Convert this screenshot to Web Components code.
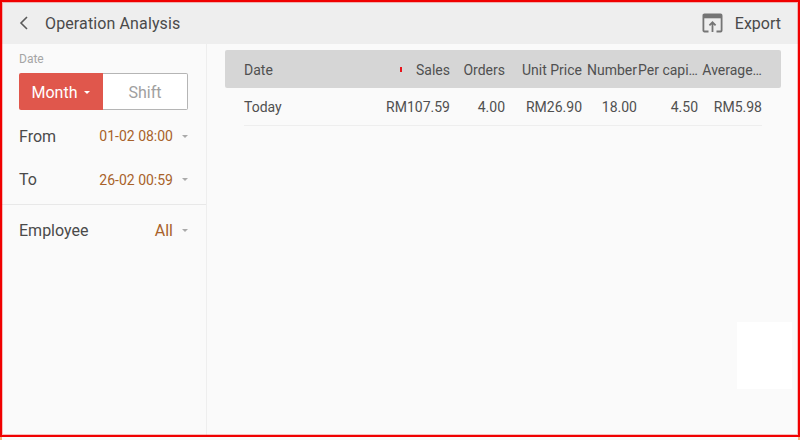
<!DOCTYPE html>
<html>
<head>
<meta charset="utf-8">
<title>Operation Analysis</title>
<style>
  html, body { margin: 0; height: 100%; }
  body { font-family: Roboto, "Liberation Sans", sans-serif; background: #fafafa; overflow: hidden; }
</style>
</head>
<body>
<analysis-app></analysis-app>
<page-foot></page-foot>

<script>
// top bar with back arrow, title and export action
class TopBar extends HTMLElement {
  constructor() {
    super();
    this.attachShadow({ mode: 'open' });
    this.shadowRoot.innerHTML = `
      <style>
        :host {
          display: flex;
          align-items: center;
          height: 42px;
          padding: 0 17px 0 17px;
          background: #eeeeee;
          color: #4a4a4a;
          font-size: 16px;
          flex: none;
        }
        .back { width: 9px; height: 14px; margin-right: 17px; }
        .title { flex: 1; letter-spacing: .12px; }
        .icon { width: 21px; height: 20px; margin-right: 12px; }
      </style>
      <svg class="back" viewBox="0 0 9 14" fill="none" stroke="#5a5a5a" stroke-width="1.6">
        <path d="M8 1 2 7l6 6"/>
      </svg>
      <span class="title"><slot></slot></span>
      <svg class="icon" viewBox="0 0 21 20" fill="none" stroke="#757575" stroke-width="1.8">
        <path d="M6.5 18.5H2.4a1 1 0 0 1-1-1V2.4a1 1 0 0 1 1-1h16.2a1 1 0 0 1 1 1v15.1a1 1 0 0 1-1 1h-4.1"/>
        <path d="M2 3.6h17" stroke-width="3.4"/>
        <path d="M10.5 19v-9M7.4 12.4l3.1-3.1 3.1 3.1"/>
      </svg>
      <span>Export</span>
    `;
  }
}

// label + value + small caret
class FilterRow extends HTMLElement {
  constructor() {
    super();
    this.attachShadow({ mode: 'open' });
    this.shadowRoot.innerHTML = `
      <style>
        :host {
          display: flex;
          align-items: center;
          justify-content: space-between;
          height: 43.5px;
          padding: 0 18px 0 17px;
          font-size: 16px;
          color: #4a4a4a;
        }
        .value { display: flex; align-items: center; color: #a8622a; font-size: var(--value-size, 14px); }
        .caret {
          width: 0; height: 0;
          margin-left: 9px;
          border-left: 3.5px solid transparent;
          border-right: 3.5px solid transparent;
          border-top: 3.5px solid #aaa;
        }
      </style>
      <span><slot name="label"></slot></span>
      <span class="value"><slot></slot><i class="caret"></i></span>
    `;
  }
}

// Month / Shift segmented control
class PeriodSwitch extends HTMLElement {
  constructor() {
    super();
    this.attachShadow({ mode: 'open' });
    this.shadowRoot.innerHTML = `
      <style>
        :host {
          display: flex;
          height: 37.5px;
          margin: 0 18px 0 17px;
          font-size: 16px;
        }
        div {
          display: flex;
          align-items: center;
          justify-content: center;
          box-sizing: border-box;
          flex: 1;
          padding-top: 2px;
        }
        .on { background: #e0574c; color: #fff; border-radius: 2px 0 0 2px; }
        .off {
          color: #a0a0a0;
          background: #fff;
          border: 1px solid #b5b5b5;
          border-left: 0;
          border-radius: 0 2px 2px 0;
        }
        .caret {
          width: 0; height: 0;
          margin-left: 7px;
          border-left: 3.5px solid transparent;
          border-right: 3.5px solid transparent;
          border-top: 3.5px solid #fff;
        }
      </style>
      <div class="on">Month<i class="caret"></i></div>
      <div class="off">Shift</div>
    `;
  }
}

class SidePanel extends HTMLElement {
  constructor() {
    super();
    this.attachShadow({ mode: 'open' });
    this.shadowRoot.innerHTML = `
      <style>
        :host {
          display: block;
          box-sizing: border-box;
          width: 205px;
          flex: none;
          border-right: 1px solid #eeeeee;
          padding-top: 8px;
        }
        .cap { font-size: 12px; line-height: 14px; color: #a5a5a5; padding: 0 0 6.5px 17px; }
        period-switch { margin-bottom: 4.5px; }
        hr { margin: 2.5px 0 4px; border: 0; border-top: 1px solid #e8e8e8; }
        .emp { --value-size: 16px; }
      </style>
      <div class="cap">Date</div>
      <period-switch></period-switch>
      <filter-row><span slot="label">From</span>01-02 08:00</filter-row>
      <filter-row><span slot="label">To</span>26-02 00:59</filter-row>
      <hr>
      <filter-row class="emp"><span slot="label">Employee</span>All</filter-row>
    `;
  }
}

const COLUMNS = [
  { name: 'Date', value: 'Today', width: 120, left: true },
  { name: 'Sales', value: 'RM107.59', width: 86 },
  { name: 'Orders', value: '4.00', width: 55 },
  { name: 'Unit Price', value: 'RM26.90', width: 77 },
  { name: 'Number', value: '18.00', width: 55 },
  { name: 'Per capi…', value: '4.50', width: 61 },
  { name: 'Average…', value: 'RM5.98', width: 64 }
];

class ReportTable extends HTMLElement {
  constructor() {
    super();
    this.attachShadow({ mode: 'open' });
    const cols = COLUMNS.map(c => c.width + 'px').join(' ');
    const cell = (text, c) => `<span class="${c.left ? 'left' : ''}">${text}</span>`;
    this.shadowRoot.innerHTML = `
      <style>
        :host {
          display: block;
          flex: 1;
          padding: 6px 17px 0 18px;
          font-size: 14px;
          color: #505050;
        }
        .row {
          display: grid;
          grid-template-columns: ${cols};
          align-items: center;
        }
        .row span {
          text-align: right;
          white-space: nowrap;
        }
        .row span.left { text-align: left; }
        .head {
          position: relative;
          height: 37px;
          padding: 1px 19px 0;
          background: #d6d6d6;
          border-radius: 2px;
        }
        .body {
          height: 37px;
          margin: 0 19px;
          border-bottom: 1px solid #eeeeee;
        }
        .mark {
          position: absolute;
          left: 175px;
          top: 17px;
          width: 1.5px;
          height: 5px;
          background: #e8141c;
        }
      </style>
      <div class="row head">
        ${COLUMNS.map(c => cell(c.name, c)).join('')}
        <i class="mark"></i>
      </div>
      <div class="row body">
        ${COLUMNS.map(c => cell(c.value, c)).join('')}
      </div>
    `;
  }
}

class AnalysisApp extends HTMLElement {
  constructor() {
    super();
    this.attachShadow({ mode: 'open' });
    this.shadowRoot.innerHTML = `
      <style>
        :host {
          display: flex;
          flex-direction: column;
          position: relative;
          box-sizing: border-box;
          width: 800px;
          height: 437px;
          border: 2px solid #f00000;
          overflow: hidden;
        }
        /* soft pink edge just inside the red frame */
        :host::after {
          content: '';
          position: absolute;
          inset: 0;
          box-shadow: inset 0 0 0 1px rgba(240, 0, 0, .25);
          pointer-events: none;
        }
        .main { display: flex; flex: 1; }
        .blank {
          position: absolute;
          right: 6px;
          top: 320px;
          width: 55px;
          height: 67px;
          background: #fff;
        }
      </style>
      <top-bar>Operation Analysis</top-bar>
      <div class="main">
        <side-panel></side-panel>
        <report-table></report-table>
      </div>
      <div class="blank"></div>
    `;
  }
}

// strip under the red frame, orange at both corners
class PageFoot extends HTMLElement {
  constructor() {
    super();
    this.attachShadow({ mode: 'open' });
    this.shadowRoot.innerHTML = `
      <style>
        :host { display: flex; justify-content: space-between; height: 3px; }
        i { width: 2px; background: #f7b27c; }
      </style>
      <i></i><i></i>
    `;
  }
}

customElements.define('top-bar', TopBar);
customElements.define('filter-row', FilterRow);
customElements.define('period-switch', PeriodSwitch);
customElements.define('side-panel', SidePanel);
customElements.define('report-table', ReportTable);
customElements.define('analysis-app', AnalysisApp);
customElements.define('page-foot', PageFoot);
</script>
</body>
</html>
